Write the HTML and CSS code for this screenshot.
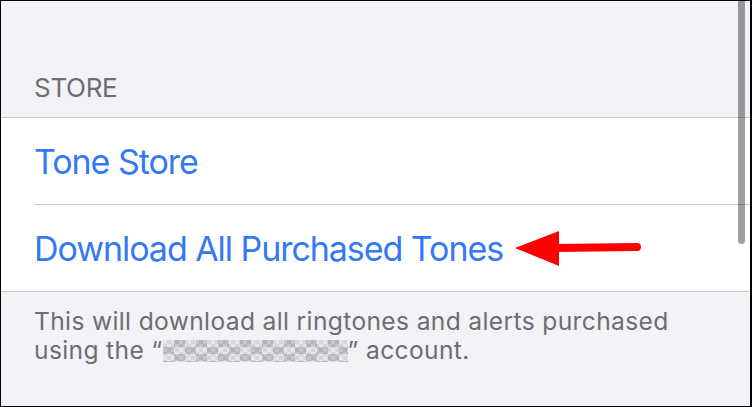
FILE: index.html
```html
<!DOCTYPE html>
<html lang="en">

<head>
    <meta charset="UTF-8">
    <title>Ringtone</title>
    <link rel="stylesheet" href="styles.css">
</head>

<body>
    <div class="screen">
        <div class="section-header">STORE</div>

        <div class="group">
            <div class="row">Tone Store</div>
            <div class="row">Download All Purchased Tones</div>
        </div>

        <div class="section-footer">
            This will download all ringtones and alerts purchased<br>
            using the &ldquo;<span class="blurred"></span>&rdquo; account.
        </div>

        <div class="scrollbar"></div>

        <svg class="arrow" width="130" height="40" viewBox="0 0 130 40">
            <path d="M0 18 L44 1 L44 36 Z" fill="#ff0000"/>
            <line x1="40" y1="18" x2="122" y2="17" stroke="#ff0000" stroke-width="8" stroke-linecap="round"/>
        </svg>
    </div>
</body>

</html>
```

FILE: styles.css
```css
body {
    margin: 0;
    padding: 0;
    font-family: Inter, "Noto Sans", sans-serif;
}

.screen {
    position: relative;
    box-sizing: border-box;
    width: 752px;
    height: 407px;
    background-color: #f2f2f7;
    border-top: 1px solid #000;
    border-left: 1px solid #000;
    border-bottom: 1px solid #000;
    border-right: 2px solid #000;
    overflow: hidden;
}

.section-header {
    height: 116px;
    box-sizing: border-box;
    display: flex;
    align-items: flex-end;
    padding: 0 0 13px 33px;
    font-size: 26px;
    line-height: 32px;
    letter-spacing: -0.3px;
    color: #6d6d72;
}

.group {
    background: #fff;
    border-top: 1px solid #c6c6c8;
    border-bottom: 1px solid #c6c6c8;
    padding-left: 33px;
}

.row {
    height: 86px;
    display: flex;
    align-items: center;
    font-size: 34px;
    letter-spacing: -1.05px;
    color: #3478f6;
}

.row + .row {
    border-top: 1px solid #c6c6c8;
}

.section-footer {
    padding: 15px 40px 0 33px;
    font-size: 24.6px;
    line-height: 29px;
    letter-spacing: 0.35px;
    color: #6d6d72;
}

.blurred {
    display: inline-block;
    width: 185px;
    height: 22px;
    vertical-align: -3px;
    background-color: #d0d0d4;
    background-image:
        repeating-conic-gradient(rgba(150, 150, 155, 0.35) 0 25%, rgba(240, 240, 244, 0.4) 0 50%),
        repeating-conic-gradient(#c4c4c8 0 25%, #e0e0e4 0 50%);
    background-size: 22px 14px, 8px 8px;
}

.scrollbar {
    position: absolute;
    top: 0;
    right: 5px;
    width: 7px;
    height: 243px;
    border-radius: 0 0 4px 4px;
    background: rgba(0, 0, 0, 0.38);
}

.arrow {
    position: absolute;
    left: 514px;
    top: 229px;
}
```
